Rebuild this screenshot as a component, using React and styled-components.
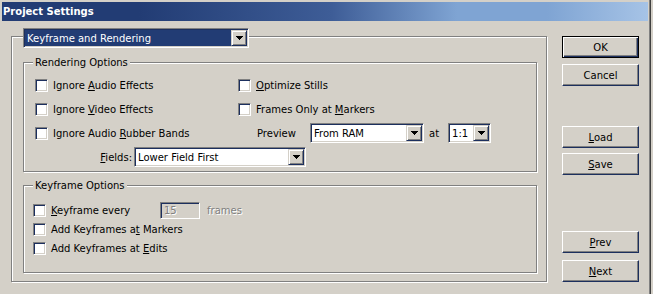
import React from "react";
import styled, { createGlobalStyle } from "styled-components";

const NAVY = "#223c74";
const FACE = "#d4d0c8";
const SHADOW = "#808080";
const HILITE = "#ffffff";
const DARK = "#1c2f5e";

const GlobalStyle = createGlobalStyle`
  html, body { margin: 0; padding: 0; background: ${FACE}; }
  body {
    font-family: "DejaVu Sans", "Liberation Sans", sans-serif;
    font-size: 10px;
    color: #000;
  }
  * { box-sizing: border-box; }
`;

const Window = styled.div`
  width: 651px;
  height: 294px;
  background: ${FACE};
  border-right: 1px solid #404040;
  box-shadow: inset -1px 0 0 ${SHADOW};
  display: flex;
  flex-direction: column;
  overflow: hidden;
`;

const TitleBar = styled.div`
  margin: 2px 0 0 2px;
  width: 646px;
  height: 19px;
  display: flex;
  align-items: center;
  padding-left: 1px;
  color: #fff;
  font-weight: bold;
  font-size: 10px;
  background: linear-gradient(
    to right,
    ${NAVY} 0px,
    ${NAVY} 137px,
    #3e5d97 330px,
    #7fa4d3 455px,
    #7fa4d3 545px,
    #a6c3e6 646px
  );
`;

const Body = styled.div`
  display: flex;
  align-items: flex-start;
`;

const OuterGroup = styled.div`
  margin: 15px 0 0 11px;
  width: 536px;
  border: 1px solid ${SHADOW};
  box-shadow: inset 1px 1px 0 ${HILITE}, 1px 1px 0 ${HILITE};
  padding: 0 9px 8px 11px;
`;

const CaptionSlot = styled.div`
  margin-top: -9px;
  width: fit-content;
`;

const InnerGroup = styled.div`
  margin-top: ${(p) => p.$mt}px;
  border: 1px solid ${SHADOW};
  box-shadow: inset 1px 1px 0 ${HILITE}, 1px 1px 0 ${HILITE};
  padding-bottom: ${(p) => p.$pb}px;
`;

const Caption = styled.div`
  width: fit-content;
  height: 13px;
  line-height: 13px;
  margin: -7px 0 0 9px;
  padding: 0 2px;
  background: ${FACE};
`;

const Rows = styled.div`
  padding-top: ${(p) => p.$pt}px;
  padding-left: ${(p) => p.$pl}px;
`;

const Row = styled.div`
  display: flex;
  align-items: center;
  height: ${(p) => p.$h}px;
`;

const CheckItem = styled.label`
  display: flex;
  align-items: center;
  gap: 5px;
  width: ${(p) => (p.$w ? `${p.$w}px` : "auto")};
  flex: none;
  white-space: nowrap;
`;

const Box = styled.span`
  width: 13px;
  height: 13px;
  flex: none;
  background: #fff;
  border: 1px solid;
  border-color: ${SHADOW} ${HILITE} ${HILITE} ${SHADOW};
  box-shadow: inset 1px 1px 0 ${DARK}, inset -1px -1px 0 ${FACE};
`;

const Key = styled.span`
  text-decoration: underline;
`;

const PlainLabel = styled.span`
  flex: none;
  white-space: nowrap;
  margin-left: ${(p) => p.$ml || 0}px;
  margin-right: ${(p) => p.$mr || 0}px;
  width: ${(p) => (p.$w ? `${p.$w}px` : "auto")};
  text-align: ${(p) => p.$align || "left"};
  padding-right: ${(p) => p.$pr || 0}px;
`;

const DisabledText = styled.span`
  color: ${SHADOW};
  text-shadow: 1px 1px 0 #fff;
  margin-left: ${(p) => p.$ml || 0}px;
`;

const SelectBox = styled.div`
  display: flex;
  flex: none;
  width: ${(p) => p.$w}px;
  height: ${(p) => p.$h || 20}px;
  background: #fff;
  border: 1px solid;
  border-color: ${SHADOW} ${HILITE} ${HILITE} ${SHADOW};
  box-shadow: inset 1px 1px 0 ${DARK}, inset -1px -1px 0 ${FACE};
  padding: 1px;
`;

const SelectValue = styled.div`
  flex: 1;
  min-width: 0;
  padding-left: 2px;
  display: flex;
  align-items: center;
  white-space: nowrap;
  overflow: hidden;
  background: ${(p) => (p.$focused ? NAVY : "#fff")};
  color: ${(p) => (p.$focused ? "#fff" : "#000")};
`;

const DropButton = styled.div`
  width: 16px;
  flex: none;
  background: ${FACE};
  border: 1px solid;
  border-color: ${FACE} ${DARK} ${DARK} ${FACE};
  box-shadow: inset 1px 1px 0 ${HILITE}, inset -1px -1px 0 ${SHADOW};
  display: flex;
  align-items: center;
  justify-content: center;
`;

const TextField = styled.div`
  flex: none;
  width: ${(p) => p.$w}px;
  height: 17px;
  background: ${FACE};
  border: 1px solid;
  border-color: ${SHADOW} ${HILITE} ${HILITE} ${SHADOW};
  box-shadow: inset 1px 1px 0 ${DARK}, inset -1px -1px 0 ${FACE};
  padding-left: 3px;
  line-height: 15px;
`;

const ButtonColumn = styled.div`
  display: flex;
  flex-direction: column;
  margin: 15px 0 0 15px;
`;

const PushButton = styled.button`
  width: 77px;
  height: 22px;
  margin: ${(p) => p.$mt || 0}px 0 0 0;
  padding: 0;
  font: inherit;
  color: #000;
  background: ${FACE};
  border: 1px solid;
  border-color: ${(p) =>
    p.$default ? "#000" : `${HILITE} ${DARK} ${DARK} ${HILITE}`};
  box-shadow: ${(p) =>
    p.$default
      ? `inset 1px 1px 0 ${HILITE}, inset -1px -1px 0 ${DARK}, inset -2px -2px 0 ${SHADOW}`
      : `inset -1px -1px 0 ${SHADOW}`};
`;

const Arrow = () => (
  <svg width="7" height="4" viewBox="0 0 7 4" shapeRendering="crispEdges">
    <path d="M0 0H7V1H6V2H5V3H4V4H3V3H2V2H1V1H0Z" fill="#000" />
  </svg>
);

const Select = ({ w, h, value, focused }) => (
  <SelectBox $w={w} $h={h}>
    <SelectValue $focused={focused}>{value}</SelectValue>
    <DropButton>
      <Arrow />
    </DropButton>
  </SelectBox>
);

const Check = ({ w, children }) => (
  <CheckItem $w={w}>
    <Box />
    <span>{children}</span>
  </CheckItem>
);

export default function App() {
  return (
    <>
      <GlobalStyle />
      <Window>
        <TitleBar>Project Settings</TitleBar>
        <Body>
          <OuterGroup>
            <CaptionSlot>
              <Select w={226} value="Keyframe and Rendering" focused />
            </CaptionSlot>

            <InnerGroup $mt={14} $pb={2}>
              <Caption>Rendering Options</Caption>
              <Rows $pt={4} $pl={11}>
                <Row $h={24}>
                  <Check w={203}>
                    Ignore <Key>A</Key>udio Effects
                  </Check>
                  <Check>
                    <Key>O</Key>ptimize Stills
                  </Check>
                </Row>
                <Row $h={24}>
                  <Check w={203}>
                    Ignore <Key>V</Key>ideo Effects
                  </Check>
                  <Check>
                    Frames Only at <Key>M</Key>arkers
                  </Check>
                </Row>
                <Row $h={24}>
                  <Check w={203}>
                    Ignore Audio <Key>R</Key>ubber Bands
                  </Check>
                  <PlainLabel $ml={19} $w={53}>
                    Preview
                  </PlainLabel>
                  <Select w={114} value="From RAM" />
                  <PlainLabel $ml={5} $mr={9}>
                    at
                  </PlainLabel>
                  <Select w={43} value="1:1" />
                </Row>
                <Row $h={24}>
                  <PlainLabel $w={99} $align="right" $pr={2}>
                    <Key>F</Key>ields:
                  </PlainLabel>
                  <Select w={172} value="Lower Field First" />
                </Row>
              </Rows>
            </InnerGroup>

            <InnerGroup $mt={13} $pb={14}>
              <Caption>Keyframe Options</Caption>
              <Rows $pt={9} $pl={9}>
                <Row $h={19}>
                  <Check w={127}>
                    <Key>K</Key>eyframe every
                  </Check>
                  <TextField $w={40}>
                    <DisabledText>15</DisabledText>
                  </TextField>
                  <DisabledText $ml={7}>frames</DisabledText>
                </Row>
                <Row $h={19}>
                  <Check>
                    Add Keyframes a<Key>t</Key> Markers
                  </Check>
                </Row>
                <Row $h={19}>
                  <Check>
                    Add Keyframes at <Key>E</Key>dits
                  </Check>
                </Row>
              </Rows>
            </InnerGroup>
          </OuterGroup>

          <ButtonColumn>
            <PushButton $default>OK</PushButton>
            <PushButton $mt={6}>Cancel</PushButton>
            <PushButton $mt={40}>
              <Key>L</Key>oad
            </PushButton>
            <PushButton $mt={5}>
              <Key>S</Key>ave
            </PushButton>
            <PushButton $mt={56}>
              <Key>P</Key>rev
            </PushButton>
            <PushButton $mt={7}>
              <Key>N</Key>ext
            </PushButton>
          </ButtonColumn>
        </Body>
      </Window>
    </>
  );
}
